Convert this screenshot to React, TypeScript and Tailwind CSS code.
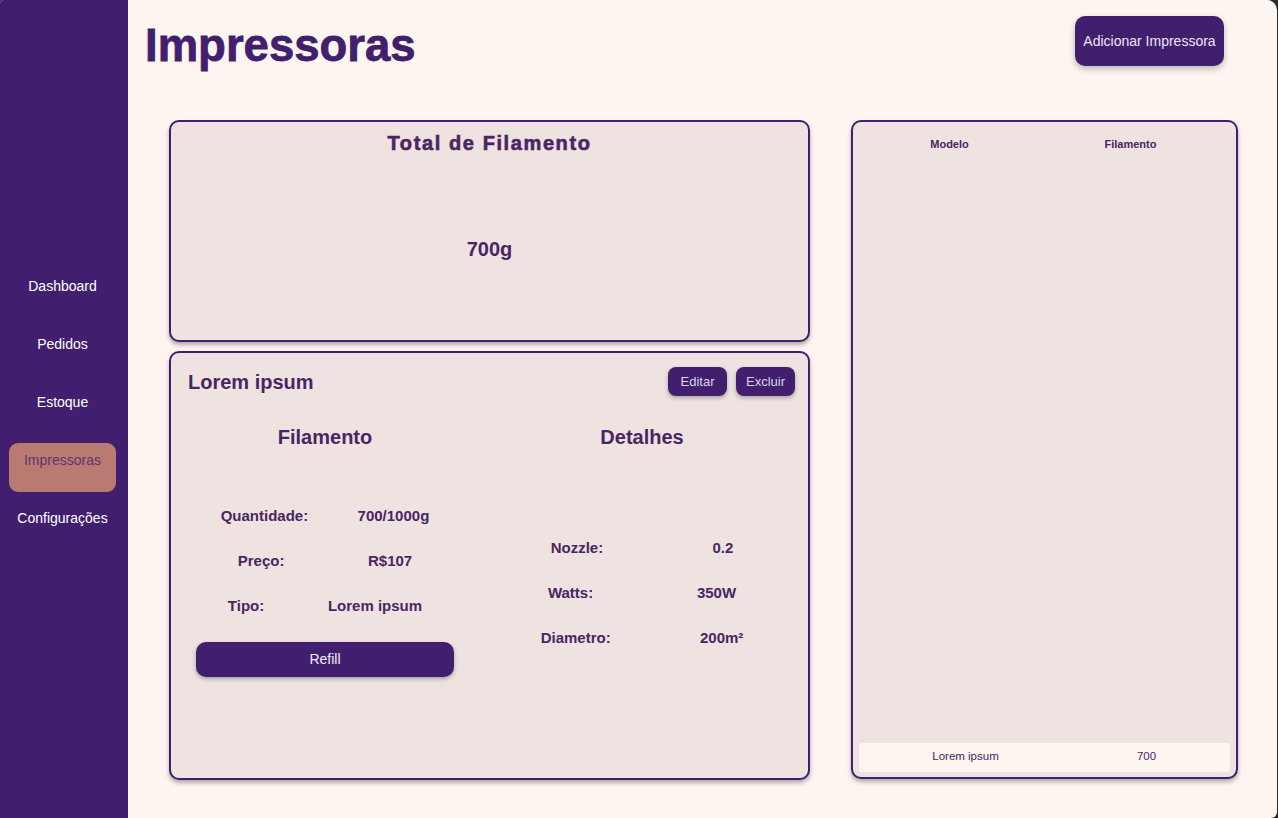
import React from 'react';

const navItems = ['Dashboard', 'Pedidos', 'Estoque', 'Impressoras', 'Configurações'];

const Row: React.FC<{ label: string; value: string }> = ({ label, value }) => (
    <div className="flex items-center justify-around h-[45px] text-[15px] font-bold text-[#4a2565]">
        <span>{label}</span>
        <span>{value}</span>
    </div>
);

export default function App() {
    return (
        <div className="w-full h-[818px] bg-[#2b2b2b] font-['Liberation_Sans',Arial,sans-serif]">
            <div className="flex h-full w-[1277px] rounded-tr-[10px] rounded-br-[6px] rounded-tl-[4px] overflow-hidden bg-[#fdf5f0]">
                {/* Sidebar */}
                <aside className="w-[128px] shrink-0 bg-[#411f6e] flex flex-col justify-center items-start pl-[9px] gap-[9px]">
                    {navItems.map((item) => (
                        <div
                            key={item}
                            className={`w-[107px] h-[49px] rounded-[9px] pt-[7px] text-center text-[14px] ${
                                item === 'Impressoras' ? 'bg-[#b97a72] text-[#5b3770]' : 'text-white'
                            }`}>
                            {item}
                        </div>
                    ))}
                </aside>

                {/* Main */}
                <main className="flex-1">
                    <div className="flex items-start justify-between pl-[17px] pr-[53px] pt-[16px]">
                        <h1 className="text-[45.5px] leading-none font-bold text-[#411f6e] mt-[7px] [-webkit-text-stroke:0.8px_#411f6e]">
                            Impressoras
                        </h1>
                        <button className="w-[149px] h-[50px] rounded-[10px] bg-[#411f6e] text-[14px] text-[#ece6f2] pt-[1px] shadow-[0_3px_6px_rgba(0,0,0,0.25)]">
                            Adicionar Impressora
                        </button>
                    </div>

                    <div className="flex gap-[41px] pl-[41px] mt-[51px]">
                        {/* Left column */}
                        <div className="flex flex-col gap-[9px] w-[641px]">
                            <div className="h-[222px] rounded-[10px] border-2 border-[#411f6e] bg-[#eee3e0] shadow-[0_3px_4px_rgba(0,0,0,0.3)] flex flex-col items-center">
                                <h2 className="mt-[6px] text-[20px] font-bold tracking-[1.6px] text-[#4a2565] [-webkit-text-stroke:0.6px_#4a2565]">
                                    Total de Filamento
                                </h2>
                                <div className="mt-[76px] text-[20px] font-bold text-[#4a2565]">700g</div>
                            </div>

                            <div className="h-[429px] rounded-[10px] border-2 border-[#411f6e] bg-[#eee3e0] shadow-[0_3px_4px_rgba(0,0,0,0.3)]">
                                <div className="flex items-center justify-between pl-[17px] pr-[13px] pt-[14px]">
                                    <h3 className="text-[20px] font-bold text-[#4a2565]">Lorem ipsum</h3>
                                    <div className="flex gap-[9px]">
                                        <button className="w-[59px] h-[29px] rounded-[8px] bg-[#411f6e] text-[13px] text-[#ddd5e6] shadow-[0_2px_4px_rgba(0,0,0,0.3)]">
                                            Editar
                                        </button>
                                        <button className="w-[59px] h-[29px] rounded-[8px] bg-[#411f6e] text-[13px] text-[#ddd5e6] shadow-[0_2px_4px_rgba(0,0,0,0.3)]">
                                            Excluir
                                        </button>
                                    </div>
                                </div>

                                <div className="flex gap-[42px] pl-[25px] mt-[25px]">
                                    <div className="w-[258px] flex flex-col">
                                        <h4 className="text-center text-[20px] font-bold text-[#4a2565] h-[26px]">Filamento</h4>
                                        <div className="mt-[46px]">
                                            <Row label="Quantidade:" value="700/1000g" />
                                            <Row label="Preço:" value="R$107" />
                                            <Row label="Tipo:" value="Lorem ipsum" />
                                        </div>
                                        <button className="mt-[13px] h-[35px] rounded-[10px] bg-[#411f6e] text-[14px] text-[#f1ecf5] shadow-[0_2px_4px_rgba(0,0,0,0.3)]">
                                            Refill
                                        </button>
                                    </div>
                                    <div className="w-[292px] flex flex-col">
                                        <h4 className="text-center text-[20px] font-bold text-[#4a2565] h-[26px]">Detalhes</h4>
                                        <div className="mt-[78px]">
                                            <Row label="Nozzle:" value="0.2" />
                                            <Row label="Watts:" value="350W" />
                                            <Row label="Diametro:" value="200m²" />
                                        </div>
                                    </div>
                                </div>
                            </div>
                        </div>

                        {/* Right panel */}
                        <div className="w-[387px] h-[659px] rounded-[10px] border-2 border-[#411f6e] bg-[#eee3e0] shadow-[0_3px_4px_rgba(0,0,0,0.3)] flex flex-col px-[6px] pb-[5px]">
                            <div className="grid grid-cols-[181px_181px] text-[11px] font-bold text-[#4a2565] pt-[14px]">
                                <span className="text-center">Modelo</span>
                                <span className="text-center">Filamento</span>
                            </div>
                            <div className="flex-1" />
                            <div className="h-[29px] rounded-[4px] bg-[#fdf5f0] grid grid-cols-[181px_181px] items-center pl-[16px] text-[11.5px] text-[#4a2565]">
                                <span className="text-center">Lorem ipsum</span>
                                <span className="text-center">700</span>
                            </div>
                        </div>
                    </div>
                </main>
            </div>
        </div>
    );
}
